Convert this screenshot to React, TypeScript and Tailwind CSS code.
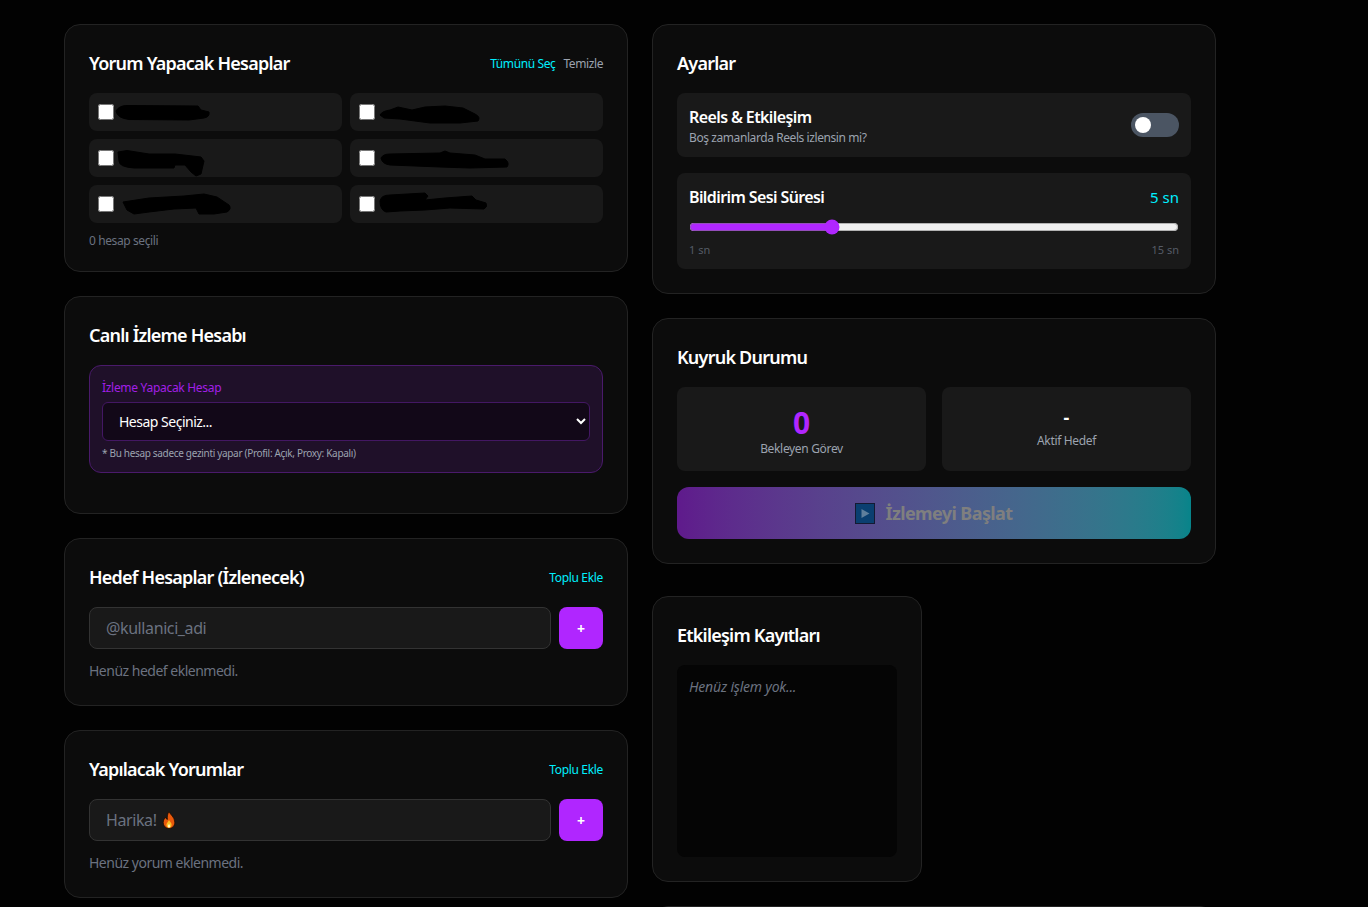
import React from 'react';

const font = { fontFamily: '"Noto Sans", "Open Sans", sans-serif' };

const Card = ({ title, right, className = '', children }: { title: string; right?: React.ReactNode; className?: string; children: React.ReactNode }) => (
  <div className={`bg-[#0c0c0c] border border-[#232323] rounded-2xl p-6 ${className}`}>
    <div className="flex items-center justify-between mb-4 h-7">
      <h2 className="text-[18px] leading-7 font-semibold tracking-[-0.78px] text-white">{title}</h2>
      {right}
    </div>
    {children}
  </div>
);

// hand-scribbled redactions over the account names
const blobs = [
  'M27 18Q30 12.5 38 12.5L109 13L112 17L120 19Q121 24 115 25L100 27L40 26.5Q28 25 27 18Z',
  'M30 22Q32 18 40 17L48 14L62 17L75 14L95 13L113 15L125 21Q131 24 128 28L110 30L80 30L50 26L34 25Z',
  'M29 13L38 11.5L60 15L86 15L112 18L115 22L112 35L107 37L102 33L96 26L86 26L85 29L45 29Q30 28 30 22Z',
  'M31 19Q33 15 40 15L90 14L95 12L100 14L125 16L135 20L155 20Q160 24 157 28L120 29L90 28L40 26Q32 25 31 19Z',
  'M34 17L60 13L95 11L115 9L128 12L140 20Q143 24 138 27L125 29L110 29L107 23L85 24L60 27L45 29L38 25Z',
  'M30 16Q31 10 40 10L75 8L78 11L75 15L95 13L122 11L126 15L136 18Q138 22 134 24L100 23L75 25L50 26L36 27Q30 25 30 16Z',
];

const AccountRow = ({ path }: { path: string }) => (
  <label className="relative flex items-center h-[38px] px-[9px] bg-[#191919] rounded-lg">
    <input type="checkbox" className="w-4 h-4 shrink-0" />
    <svg className="absolute inset-0 w-full h-full overflow-visible pointer-events-none">
      <path d={path} fill="#000" stroke="#000" strokeWidth="1" strokeLinejoin="round" />
    </svg>
  </label>
);

const AddRow = ({ placeholder, fire }: { placeholder: string; fire?: boolean }) => (
  <div className="flex gap-2">
    <div className="relative flex-1">
      <input
        placeholder={placeholder}
        className="w-full h-[42px] px-4 bg-[#191919] border border-[#333333] rounded-lg text-base tracking-[-0.4px] text-white placeholder:text-[#6b7280] outline-none"
      />
      {fire && (
        <svg className="absolute left-[73px] top-[12px] w-[14px] h-[18px]" viewBox="0 0 14 18">
          <path d="M7 0.5C8 3.5 12.8 6 12.8 11.2C12.8 15 10.2 17.5 7 17.5C3.8 17.5 1.2 15 1.2 11.6C1.2 9 2.6 7.4 3.6 6.2C4 7.6 4.6 8.2 5.4 8.4C5 5.5 5.6 2.5 7 0.5Z" fill="#e8590c" stroke="#1a0a00" strokeWidth="0.8" />
          <path d="M7 9C7.6 10.6 9.6 11.6 9.6 13.8C9.6 15.6 8.4 16.8 7 16.8C5.6 16.8 4.4 15.6 4.4 13.8C4.4 12.2 6.2 11 7 9Z" fill="#fbbf24" />
          <path d="M7 13C7.6 13.8 8.2 14.4 8.2 15.2C8.2 16 7.6 16.6 7 16.6C6.4 16.6 5.8 16 5.8 15.2C5.8 14.4 6.6 13.8 7 13Z" fill="#fff7c2" />
        </svg>
      )}
    </div>
    <button className="w-11 h-[42px] pt-0.5 rounded-lg bg-[#b026ff] text-white text-sm font-bold">+</button>
  </div>
);

const TopluEkle = () => <button className="translate-y-px text-xs tracking-[-0.33px] text-[#00f0ff]">Toplu Ekle</button>;

export default function App() {
  return (
    <div style={font} className="h-[907px] overflow-hidden bg-[#020202] pt-6 pl-16">
      <div className="grid grid-cols-2 gap-6 w-[1152px] items-start">
        <div className="flex flex-col gap-6">
          <Card
            title="Yorum Yapacak Hesaplar"
            right={
              <div className="flex gap-2 translate-y-px text-xs tracking-[-0.4px]">
                <button className="text-[#00f0ff]">Tümünü Seç</button>
                <button className="text-[#9ca3af]">Temizle</button>
              </div>
            }
          >
            <div className="grid grid-cols-2 gap-2">
              {blobs.map((b) => (
                <AccountRow key={b} path={b} />
              ))}
            </div>
            <p className="mt-2 translate-y-0.5 text-xs tracking-[-0.4px] text-[#6b7280]">0 hesap seçili</p>
          </Card>

          <Card title="Canlı İzleme Hesabı">
            <div className="mb-4 p-3 bg-[#1f1029] border border-[#4a1a6b] rounded-xl">
              <label className="block mb-2 translate-y-0.5 text-xs tracking-[-0.3px] text-[#a21fe6]">İzleme Yapacak Hesap</label>
              <select className="w-full h-[39px] px-3 bg-[#120818] border border-[#431763] rounded-md text-sm tracking-[-0.5px] text-white outline-none">
                <option>Hesap Seçiniz...</option>
              </select>
              <p className="mt-1 translate-y-px text-[10px] tracking-[-0.32px] text-[#9ca3af]">* Bu hesap sadece gezinti yapar (Profil: Açık, Proxy: Kapalı)</p>
            </div>
          </Card>

          <Card title="Hedef Hesaplar (İzlenecek)" right={<TopluEkle />}>
            <AddRow placeholder="@kullanici_adi" />
            <p className="mt-3 text-sm tracking-[-0.5px] text-[#6b7280]">Henüz hedef eklenmedi.</p>
          </Card>

          <Card title="Yapılacak Yorumlar" right={<TopluEkle />}>
            <AddRow placeholder="Harika!" fire />
            <p className="mt-3 text-sm tracking-[-0.5px] text-[#6b7280]">Henüz yorum eklenmedi.</p>
          </Card>
        </div>

        <div className="flex flex-col">
          <Card title="Ayarlar" className="mb-6">
            <div className="flex items-center justify-between p-3 mb-4 bg-[#191919] rounded-lg">
              <div>
                <div className="text-base font-semibold tracking-[-0.6px] text-white">Reels &amp; Etkileşim</div>
                <div className="translate-y-px text-xs tracking-[-0.42px] text-[#9ca3af]">Boş zamanlarda Reels izlensin mi?</div>
              </div>
              <div className="flex items-center w-12 h-6 px-1 bg-[#4b5563] rounded-full">
                <span className="w-4 h-4 bg-white rounded-full" />
              </div>
            </div>
            <div className="h-24 p-3 bg-[#191919] rounded-lg">
              <div className="flex items-center justify-between">
                <span className="text-base font-semibold tracking-[-0.6px] text-white">Bildirim Sesi Süresi</span>
                <span className="text-[15px] text-[#00f0ff]">5 sn</span>
              </div>
              <input type="range" min={1} max={15} defaultValue={5} className="block w-full h-4 mt-2.5 accent-[#b026ff]" />
              <div className="flex justify-between mt-[7px] text-[11px] text-[#555b66]">
                <span>1 sn</span>
                <span>15 sn</span>
              </div>
            </div>
          </Card>

          <Card title="Kuyruk Durumu" className="mb-8">
            <div className="grid grid-cols-2 gap-4 mb-4">
              <div className="h-[84px] p-4 bg-[#191919] rounded-lg text-center">
                <div className="translate-y-0.5 text-3xl leading-9 font-bold text-[#b026ff]">0</div>
                <div className="translate-y-0.5 text-xs tracking-[-0.33px] text-[#9ca3af]">Bekleyen Görev</div>
              </div>
              <div className="h-[84px] p-4 bg-[#191919] rounded-lg text-center">
                <div className="text-lg leading-7 font-bold text-white">-</div>
                <div className="translate-y-0.5 text-xs tracking-[-0.33px] text-[#9ca3af]">Aktif Hedef</div>
              </div>
            </div>
            <button className="flex items-center justify-center gap-2.5 w-full h-[52px] rounded-xl bg-linear-to-r from-[#5f1a8c] to-[#07848a] text-lg font-bold tracking-[-0.6px] text-[#7f7f7f]">
              <svg width="20" height="21" viewBox="0 0 20 21">
                <rect x="0.5" y="0.5" width="19" height="20" fill="#0a3f70" stroke="#141a33" />
                <path d="M6.5 6L14.5 10.5L6.5 15Z" fill="#5f7f9c" />
              </svg>
              İzlemeyi Başlat
            </button>
          </Card>

          <div className="grid grid-cols-2 gap-6 mb-6">
            <Card title="Etkileşim Kayıtları">
              <div className="h-48 p-3 bg-[#050505] rounded-lg text-sm italic tracking-[-0.2px] text-[#6b7280]">Henüz işlem yok...</div>
            </Card>
          </div>

          <div className="h-40 bg-[#0c0c0c] border border-[#232323] rounded-2xl" />
        </div>
      </div>
    </div>
  );
}
